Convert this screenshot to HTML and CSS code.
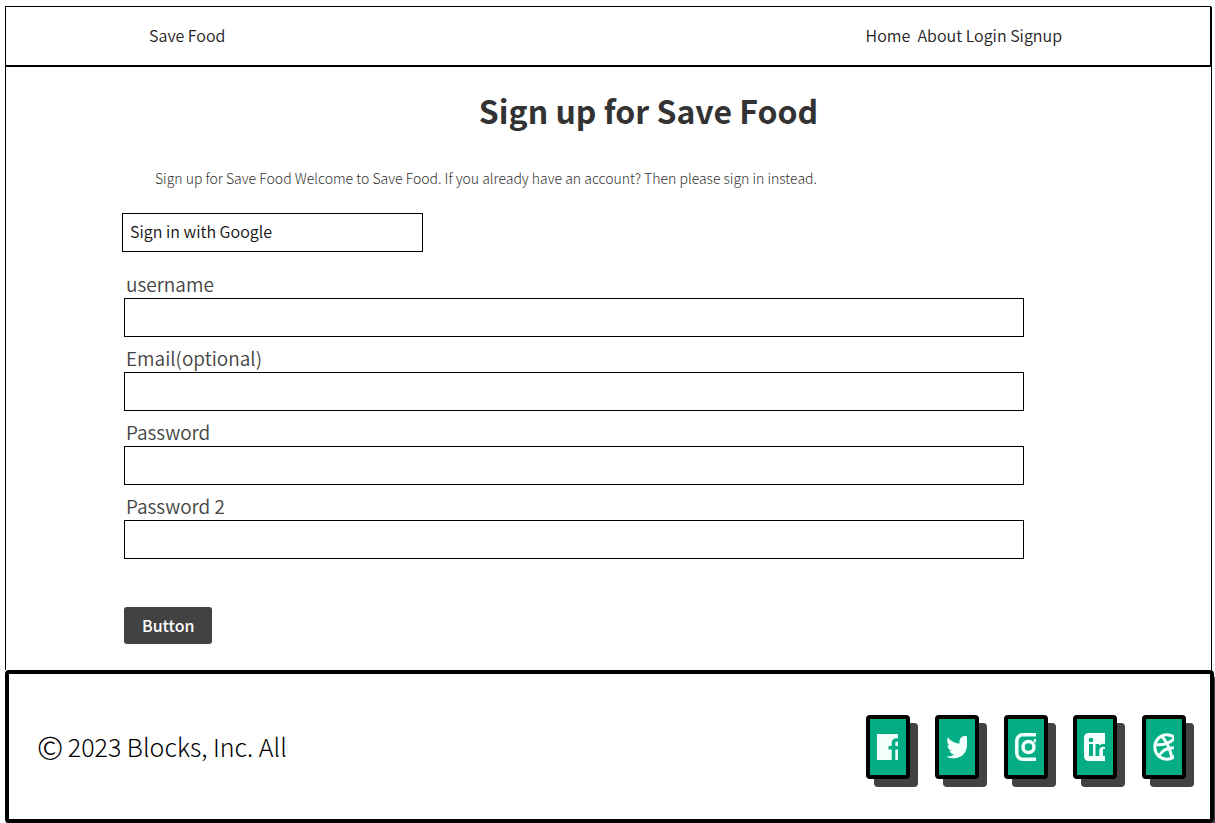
FILE: index.html
```html
<!DOCTYPE html>
<html lang="en">
<head>
<meta charset="utf-8">
<title>Sign up for Save Food</title>
<link rel="stylesheet" href="styles.css">
</head>
<body>
<header class="site-header">
  <a class="brand" href="#">Save Food</a>
  <nav class="site-nav"><a href="#">Home</a>&nbsp; <a href="#">About</a> <a href="#">Login</a> <a href="#">Signup</a></nav>
</header>
<main class="content">
  <h1 class="title">Sign up for Save Food</h1>
  <p class="intro">Sign up for Save Food Welcome to Save Food. If you already have an account? Then please sign in instead.</p>
  <form class="signup">
    <button class="google" type="button">Sign in with Google</button>
    <div class="fields">
      <div class="field"><label for="username">username</label><input id="username" type="text"></div>
      <div class="field"><label for="email">Email(optional)</label><input id="email" type="email"></div>
      <div class="field"><label for="password">Password</label><input id="password" type="password"></div>
      <div class="field"><label for="password2">Password 2</label><input id="password2" type="password"></div>
      <button class="submit" type="submit">Button</button>
    </div>
  </form>
</main>
<footer class="site-footer">
  <p class="copyright"><span class="mark">©</span> 2023 Blocks, Inc. All</p>
  <div class="social">
    <a href="#" aria-label="Facebook"><svg viewBox="0 0 21 28"><path class="fill" d="M0 1h21v26H0z"/><path class="cut" d="M22 7h-2.500q-3 0-3 3V27.500M11.500 14.800H22"/></svg></a>
    <a href="#" aria-label="Twitter"><svg viewBox="0 0 21 28"><path class="fill" d="M21 3.500C18 2 13.500 4 13.500 9v1.500C9 10.500 5 8 2 4.500 0.500 7.500 1 10.500 3.500 12.500L1.500 12c0 3 1.500 4.800 4 5.800l-2 .2c.7 2 2.300 3.200 4.500 3.400C6 23 3 23.700 0 23.400 7 27 16 25.500 19.500 18.500c.8-1.500 1.200-3.200 1.500-5z"/></svg></a>
    <a href="#" aria-label="Instagram"><svg viewBox="0 0 21 28"><rect class="line" x="1.800" y="1.800" width="24.400" height="24.400" rx="6"/><circle class="line" cx="13.500" cy="14" r="5.500"/><circle class="fill" cx="20.500" cy="7.500" r="1.800"/></svg></a>
    <a href="#" aria-label="LinkedIn"><svg viewBox="0 0 21 28"><path class="fill" d="M5 0h16v28H5q-5 0-5-5V5q0-5 5-5z"/><circle class="hole" cx="7" cy="7" r="2.300"/><path class="hole" d="M5 11h4v12H5zM11.500 11h3.800v1.800C16.500 11.300 18 10.700 21 10.700V14q-5-1-5.700 3v6h-3.800z"/><path class="hole" d="M19 16h2v7h-2z"/></svg></a>
    <a href="#" aria-label="Dribbble"><svg viewBox="0 0 21 28"><circle class="line thin" cx="14" cy="14" r="12.200"/><path class="line thin" d="M9 3.500Q16 11 19 25M2 11.500Q14 13 22 5M6 23Q11 13 26 15"/></svg></a>
  </div>
</footer>
</body>
</html>
```
FILE: styles.css
```css
* { box-sizing: border-box; }
body {
  margin: 6px 0 0 5px;
  background: #fff;
  color: #222;
  font-family: "Noto Sans CJK SC", "Noto Sans", sans-serif;
  font-weight: 350;
}
a { color: inherit; text-decoration: none; }
.site-header {
  display: flex;
  justify-content: space-between;
  align-items: center;
  height: 60px;
  margin-right: 4px;
  padding: 0 148px 2px 143px;
  border: 1px solid #000;
  box-shadow: 1px 1px 0 #000;
  font-size: 16px;
  line-height: 24px;
}
.content {
  margin-right: 3px;
  padding: 22px 120px 26px 116px;
  border: 1px solid #000;
  border-width: 0 1px;
}
.title {
  margin: 0 0 36px;
  padding-left: 84px;
  color: #333;
  font-size: 32px;
  line-height: 44px;
  font-weight: 700;
  text-align: center;
}
.intro {
  margin: 0 0 25px;
  padding-left: 33px;
  color: #333;
  font-size: 14px;
  line-height: 20px;
  font-weight: 300;
}
.signup { max-width: 902px; }
.google {
  display: block;
  width: 301px;
  height: 39px;
  margin-bottom: 18px;
  padding: 0 7px 3px;
  border: 1px solid #000;
  background: #fff;
  color: #111;
  font: inherit;
  font-size: 16px;
  text-align: left;
}
.fields { padding-left: 2px; }
.field { margin-bottom: 7px; color: #444; }
.field label {
  display: block;
  padding-left: 2px;
  font-size: 19px;
  line-height: 28px;
}
.field input {
  display: block;
  width: 100%;
  height: 39px;
  padding: 0 8px;
  border: 1px solid #000;
  background: #fff;
  font: inherit;
}
.submit {
  display: block;
  height: 37px;
  margin-top: 48px;
  padding: 0 18px 1px;
  border: 0;
  border-radius: 3px;
  background: #424242;
  color: #fff;
  font: inherit;
  font-size: 16px;
  font-weight: 500;
}
.site-footer {
  display: flex;
  justify-content: space-between;
  align-items: center;
  min-height: 153px;
  margin-right: 1px;
  padding: 0 24px 0 28px;
  border: 4px solid #000;
  border-radius: 4px;
  box-shadow: 1px 5px 0 #424242;
}
.copyright {
  margin: 0;
  padding-bottom: 2px;
  color: #000;
  font-size: 25px;
  line-height: 36px;
  font-weight: 300;
}
.mark {
  margin-right: -1px;
  font-size: 32px;
  line-height: 32px;
  vertical-align: -3px;
}
.social { display: flex; gap: 25px; }
.social a {
  display: flex;
  align-items: center;
  width: 44px;
  height: 64px;
  padding-left: 7px;
  border: 4px solid #000;
  border-radius: 4px;
  background: #05ad85;
  box-shadow: 8px 8px 0 #424242;
}
.social svg { width: 21px; height: 28px; overflow: hidden; }
.fill { fill: #f2fffb; }
.hole { fill: #05ad85; }
.cut { fill: none; stroke: #05ad85; stroke-width: 3.600px; }
.line { fill: none; stroke: #f2fffb; stroke-width: 3.500px; }
.thin { stroke-width: 3px; }
```
